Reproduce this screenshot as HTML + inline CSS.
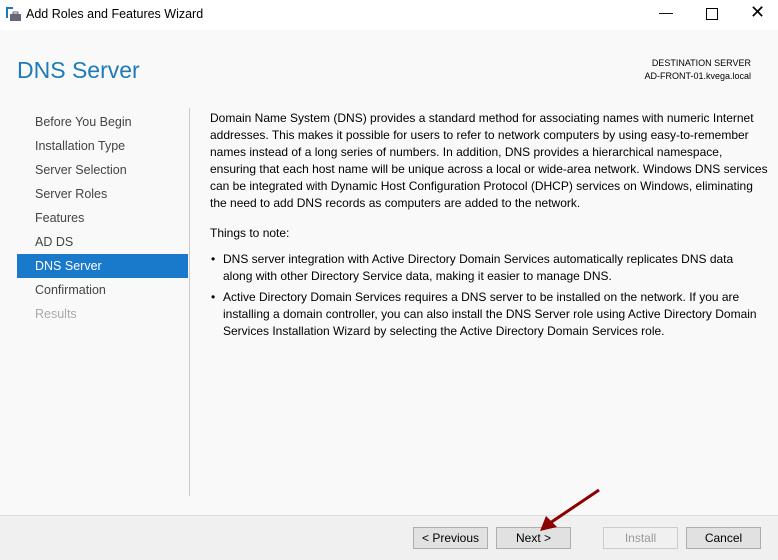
<!DOCTYPE html><html><head><style>
body{margin:0;width:778px;height:559px;background:#f9f9f9;font-family:"Liberation Sans",sans-serif;position:relative;overflow:hidden;color:#000}
.tb{position:absolute;left:0;top:0;width:778px;height:30px;background:#fff}
.a{position:absolute;white-space:nowrap}
.nav{position:absolute;left:35px;font-size:12.5px;color:#444}
.p{position:absolute;left:210px;font-size:12px;line-height:17px;width:560px;color:#000}
.btn{position:absolute;top:527px;height:20px;border:1px solid #adadad;background:#e1e1e1;font-size:12px;text-align:center;line-height:20px;width:73px}
</style></head><body>
<div class="tb"></div>
<svg class="a" style="left:5px;top:6px" width="16" height="16"><rect x="1" y="1" width="2" height="11" fill="#1e7ab8"/><rect x="1" y="1" width="7" height="2" fill="#1e7ab8"/><rect x="5" y="8" width="11" height="7" fill="#667"/><rect x="8" y="6" width="5" height="2" fill="none" stroke="#667"/></svg>
<div class="a" style="left:26px;top:7px;font-size:12.5px">Add Roles and Features Wizard</div>
<div class="a" style="left:659px;top:4px;font-size:14px">—</div>
<div class="a" style="left:706px;top:8px;width:10px;height:10px;border:1px solid #000"></div>
<div class="a" style="left:750px;top:2px;font-size:18px">✕</div>
<div class="a" style="left:17px;top:57px;font-size:23px;color:#1e7ab8">DNS Server</div>
<div class="a" style="right:27px;top:57px;font-size:9px;text-align:right;line-height:13px">DESTINATION SERVER<br>AD-FRONT-01.kvega.local</div>
<div class="a" style="left:189px;top:108px;width:1px;height:388px;background:#ccc"></div>
<div class="nav" style="top:115px">Before You Begin</div>
<div class="nav" style="top:139px">Installation Type</div>
<div class="nav" style="top:163px">Server Selection</div>
<div class="nav" style="top:187px">Server Roles</div>
<div class="nav" style="top:211px">Features</div>
<div class="nav" style="top:235px">AD DS</div>
<div class="a" style="left:17px;top:254px;width:171px;height:24px;background:#1979ca"></div>
<div class="nav" style="top:259px;color:#fff">DNS Server</div>
<div class="nav" style="top:283px">Confirmation</div>
<div class="nav" style="top:307px;color:#aaa">Results</div>
<div class="p" style="top:110px">Domain Name System (DNS) provides a standard method for associating names with numeric Internet addresses. This makes it possible for users to refer to network computers by using easy-to-remember names instead of a long series of numbers. In addition, DNS provides a hierarchical namespace, ensuring that each host name will be unique across a local or wide-area network. Windows DNS services can be integrated with Dynamic Host Configuration Protocol (DHCP) services on Windows, eliminating the need to add DNS records as computers are added to the network.</div>
<div class="p" style="top:225px">Things to note:</div>
<div class="p" style="top:251px;left:211px">•</div>
<div class="p" style="top:251px;left:223px;width:540px">DNS server integration with Active Directory Domain Services automatically replicates DNS data along with other Directory Service data, making it easier to manage DNS.</div>
<div class="p" style="top:289px;left:211px">•</div>
<div class="p" style="top:289px;left:223px;width:540px">Active Directory Domain Services requires a DNS server to be installed on the network. If you are installing a domain controller, you can also install the DNS Server role using Active Directory Domain Services Installation Wizard by selecting the Active Directory Domain Services role.</div>
<div class="a" style="left:0;top:515px;width:778px;height:44px;background:#f0f0f0;border-top:1px solid #dcdcdc"></div>
<div class="btn" style="left:413px">&lt; Previous</div>
<div class="btn" style="left:496px">Next &gt;</div>
<div class="btn" style="left:603px;color:#999;border-color:#ccc;background:#f0f0f0">Install</div>
<div class="btn" style="left:686px">Cancel</div>
<svg class="a" style="left:0;top:0" width="778" height="559"><line x1="599" y1="490" x2="550" y2="523" stroke="#8b0000" stroke-width="3"/><polygon points="540,531 546,516 557,527" fill="#8b0000"/></svg>
</body></html>
